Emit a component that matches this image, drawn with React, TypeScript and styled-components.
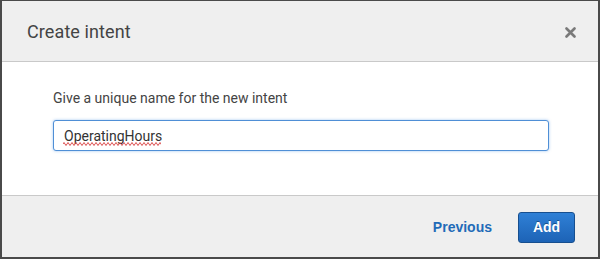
import styled, { createGlobalStyle } from 'styled-components';

const GlobalStyle = createGlobalStyle`
    html, body {
        margin: 0;
        padding: 0;
        background: #4a4a4a;
        width: 600px;
        height: 259px;
        overflow: hidden;
    }
`;

const Backdrop = styled.div`
    width: 600px;
    height: 259px;
    padding: 1px 2px 2px 2px;
    box-sizing: border-box;
`;

const Modal = styled.div`
    display: flex;
    flex-direction: column;
    height: 256px;
    background: #ffffff;
    font-family: Roboto, "Noto Sans", sans-serif;
`;

const Header = styled.header`
    display: flex;
    align-items: center;
    justify-content: space-between;
    height: 60px;
    padding: 0 22px 0 25px;
    background: #efefef;
    border-bottom: 1px solid #c9c9c9;
`;

const Title = styled.h2`
    margin: 0;
    font-size: 18px;
    font-weight: 400;
    color: #444444;
    letter-spacing: 0.1px;
`;

const CloseButton = styled.button`
    display: flex;
    align-items: center;
    justify-content: center;
    padding: 0;
    border: none;
    background: none;
    width: 12px;
    height: 12px;
    margin-top: 2px;
`;

const Body = styled.div`
    flex: 1;
    padding: 28px 49px 0 51px;
    box-sizing: border-box;
`;

const Label = styled.label`
    display: block;
    font-size: 14px;
    color: #444444;
    margin-bottom: 14px;
`;

const Field = styled.div`
    position: relative;
`;

const Input = styled.input`
    display: block;
    width: 100%;
    height: 31px;
    box-sizing: border-box;
    padding: 0 10px;
    font-family: Roboto, "Noto Sans", sans-serif;
    font-size: 14px;
    color: #333333;
    border: 1px solid #4f8fd6;
    border-radius: 3px;
    box-shadow: 0 0 3px rgba(80, 150, 230, 0.55);
    outline: none;
`;

/* spell-check squiggle under the typed word */
const Squiggle = styled.svg`
    position: absolute;
    left: 10px;
    top: 22px;
    pointer-events: none;
`;

const Footer = styled.footer`
    display: flex;
    align-items: center;
    justify-content: flex-end;
    gap: 26px;
    height: 61px;
    padding: 0 23px 0 0;
    background: #efefef;
    border-top: 1px solid #c9c9c9;
`;

const LinkButton = styled.button`
    border: none;
    background: none;
    padding: 0;
    font-family: "Liberation Sans", Arial, sans-serif;
    font-weight: 700;
    font-size: 14px;
    color: #1f6bb8;
`;

const PrimaryButton = styled.button`
    width: 57px;
    height: 31px;
    border: 1px solid #174f8f;
    border-radius: 3px;
    background: linear-gradient(#2f80d6, #1d63b6);
    color: #ffffff;
    font-family: "Liberation Sans", Arial, sans-serif;
    font-weight: 700;
    font-size: 14px;
    text-shadow: 0 -1px 0 rgba(0, 0, 0, 0.35);
    margin-top: 1px;
`;

function wave(width: number) {
    let d = 'M0 2';
    for (let x = 0; x < width; x += 4) {
        d += ` L${x + 1} 0.5 L${x + 2} 2 L${x + 3} 3.5 L${x + 4} 2`;
    }
    return d;
}

export default function App() {
    return (
        <Backdrop>
            <GlobalStyle />
            <Modal>
                <Header>
                    <Title>Create intent</Title>
                    <CloseButton aria-label="Close">
                        <svg width="11" height="11" viewBox="0 0 11 11">
                            <path d="M1.5 1.5 L9.5 9.5 M9.5 1.5 L1.5 9.5" stroke="#7a7a7a" strokeWidth="2.6" strokeLinecap="round" />
                        </svg>
                    </CloseButton>
                </Header>
                <Body>
                    <Label htmlFor="intent-name">Give a unique name for the new intent</Label>
                    <Field>
                        <Input id="intent-name" defaultValue="OperatingHours" spellCheck={false} />
                        <Squiggle width="98" height="4" viewBox="0 0 98 4">
                            <path d={wave(98)} stroke="#d83a3a" strokeWidth="0.9" fill="none" />
                        </Squiggle>
                    </Field>
                </Body>
                <Footer>
                    <LinkButton>Previous</LinkButton>
                    <PrimaryButton>Add</PrimaryButton>
                </Footer>
            </Modal>
        </Backdrop>
    );
}
